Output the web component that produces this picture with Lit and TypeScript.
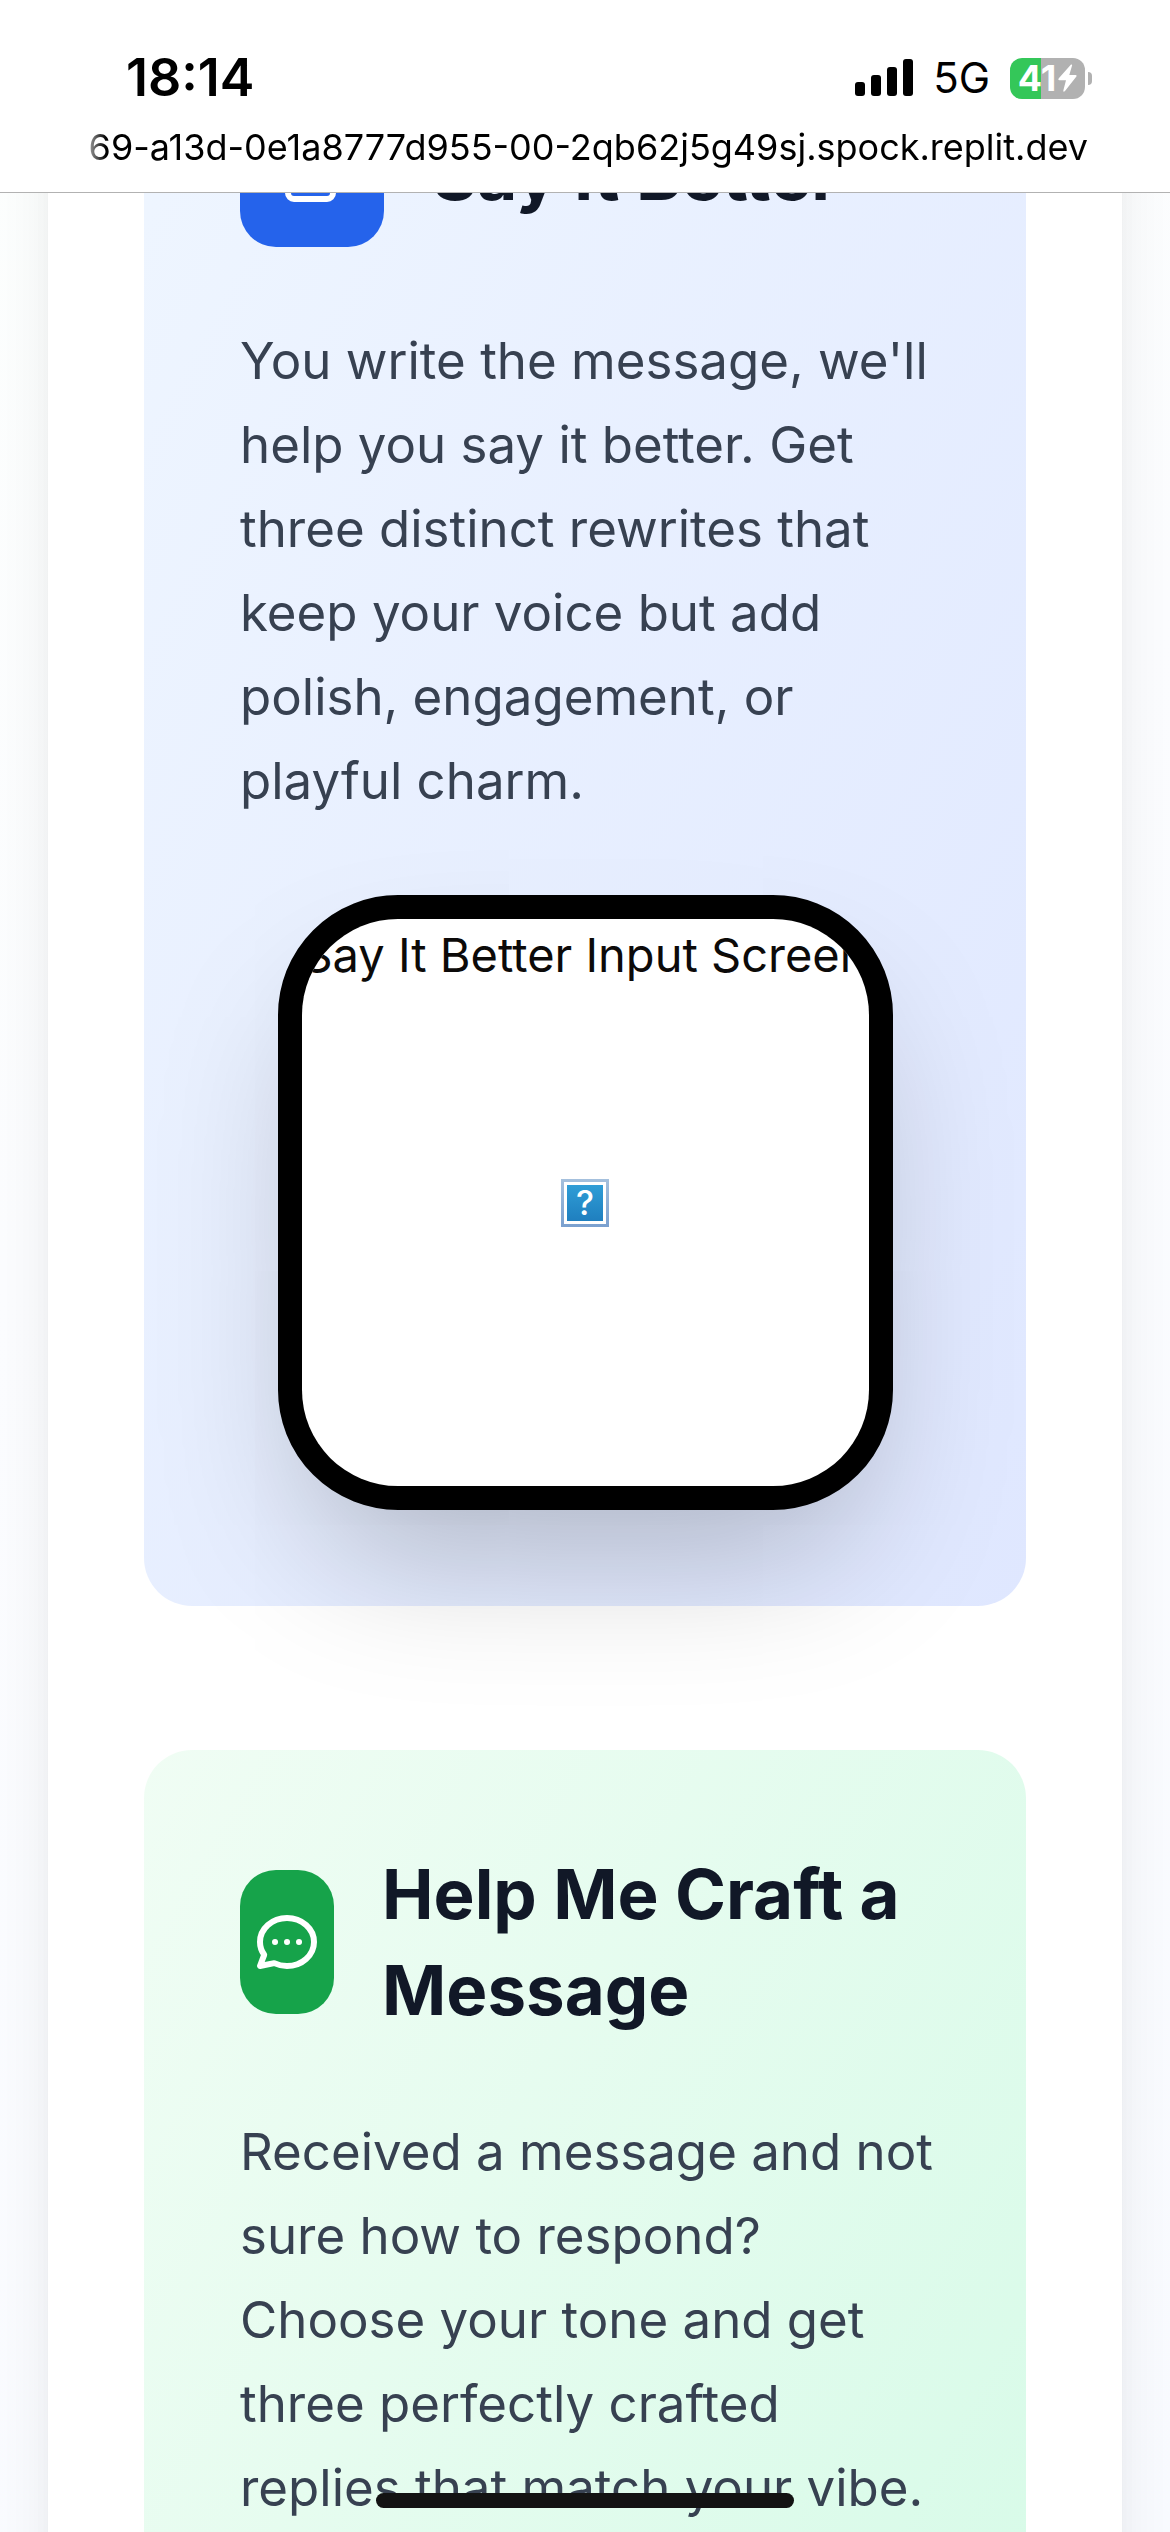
import { LitElement, html, css, svg } from "lit";
import { customElement, property } from "lit/decorators.js";

const editIcon = svg`<path d="M11 5H6a2 2 0 00-2 2v11a2 2 0 002 2h11a2 2 0 002-2v-5m-1.414-9.414a2 2 0 112.828 2.828L11.828 15H9v-2.828l8.586-8.586z" />`;
const chatIcon = svg`<path d="M8 12h.01M12 12h.01M16 12h.01M21 12c0 4.418-4.03 8-9 8a9.863 9.863 0 01-4.255-.949L3 20l1.395-3.72C3.512 15.042 3 13.574 3 12c0-4.418 4.03-8 9-8s9 3.582 9 8z" />`;

@customElement("status-header")
class StatusHeader extends LitElement {
  static styles = css`
    :host {
      display: block;
      background: #fff;
      border-bottom: 1px solid #b2b2b2;
      padding: 48px 78px 24px;
      color: #000;
    }
    .row {
      display: flex;
      align-items: center;
      height: 60px;
      padding-left: 48px;
    }
    .time {
      font-size: 52px;
      line-height: 60px;
      font-weight: 600;
      margin-right: auto;
    }
    .signal {
      width: 58px;
      height: 38px;
      margin-right: 20px;
    }
    .net {
      font-size: 42px;
      line-height: 60px;
      margin-right: 20px;
    }
    .battery {
      display: flex;
      align-items: center;
      gap: 3px;
    }
    .level {
      display: flex;
      align-items: center;
      justify-content: center;
      gap: 2px;
      width: 75px;
      height: 41px;
      border-radius: 12px;
      background: linear-gradient(to right, #34c759 41%, #b1b1b1 41%);
      color: #fff;
      font-size: 36px;
      line-height: 41px;
      font-weight: 700;
    }
    .bolt {
      width: 19px;
      height: 28px;
      fill: #fff;
    }
    .cap {
      width: 4px;
      height: 13px;
      border-radius: 0 6px 6px 0;
      background: #b1b1b1;
    }
    .address {
      display: flex;
      justify-content: flex-end;
      width: 100%;
      margin: 18px 0 0;
      padding: 0 4px 0 0;
      border: 0;
      background: none;
      overflow: hidden;
      white-space: nowrap;
      font: 400 36px/42px Inter, "Liberation Sans", sans-serif;
      color: #000;
      mask-image: linear-gradient(to right, transparent, #000 28px);
      -webkit-mask-image: linear-gradient(to right, transparent, #000 28px);
    }
  `;

  render() {
    return html`
      <div class="row">
        <span class="time">18:14</span>
        <svg class="signal" viewBox="0 0 58 38" aria-hidden="true">
          <rect x="0" y="23" width="10" height="14" rx="3" />
          <rect x="16" y="16" width="10" height="21" rx="3" />
          <rect x="32" y="8" width="10" height="29" rx="3" />
          <rect x="48" y="0" width="10" height="37" rx="3" />
        </svg>
        <span class="net">5G</span>
        <div class="battery">
          <div class="level">
            <span>41</span>
            <svg class="bolt" viewBox="0 0 19 28" aria-hidden="true">
              <path d="M13 0.5Q14.5 0 14 1.8L11.3 11H17.5Q19.3 11 18.2 12.8L7 27Q5 28.6 5.4 26.2L8 16.2H1.5Q-.4 16.2.8 14.3Z" />
            </svg>
          </div>
          <div class="cap"></div>
        </div>
      </div>
      <button class="address" type="button">
        <span>69-a13d-0e1a8777d955-00-2qb62j5g49sj.spock.replit.dev</span>
      </button>
    `;
  }
}

@customElement("device-preview")
class DevicePreview extends LitElement {
  @property() label = "";

  static styles = css`
    :host {
      display: block;
      box-sizing: border-box;
      width: 615px;
      max-width: 100%;
      aspect-ratio: 1;
      margin: 0 auto;
      border: 24px solid #000;
      border-radius: 120px;
      background: #000;
      box-shadow: 0 75px 150px -36px rgba(0, 0, 0, 0.25);
    }
    .screen {
      position: relative;
      display: grid;
      place-items: center;
      height: 100%;
      border-radius: 96px;
      overflow: hidden;
      background: #fff;
    }
    .label {
      position: absolute;
      inset: 0 0 auto;
      display: flex;
      justify-content: center;
      white-space: nowrap;
      font-size: 47px;
      line-height: 72px;
      color: #0c0a09;
    }
    .missing {
      display: grid;
      box-sizing: border-box;
      width: 48px;
      height: 48px;
      padding: 3px;
      background: linear-gradient(#a5c0dd, #7aa0cf);
    }
    .mark {
      border: 3px solid #fff;
      background: linear-gradient(#2f9dd6, #1f7fbf) padding-box;
      color: #fff;
      font-size: 34px;
      line-height: 36px;
      font-weight: 500;
      text-align: center;
    }
  `;

  render() {
    return html`
      <div class="screen">
        <span class="label">${this.label}</span>
        <div class="missing"><span class="mark">?</span></div>
      </div>
    `;
  }
}

@customElement("feature-card")
class FeatureCard extends LitElement {
  @property({ reflect: true }) tone = "blue";
  @property() heading = "";
  @property() text = "";
  @property() preview = "";

  static styles = css`
    :host {
      display: block;
      padding: 96px;
      border-radius: 48px;
      background: linear-gradient(to bottom right, #eff6ff, #dfe7ff);
    }
    :host([tone="green"]) {
      background: linear-gradient(to bottom right, #f0fdf4, #d1fae5);
    }
    .head {
      display: flex;
      align-items: center;
      gap: 48px;
      margin-bottom: 72px;
    }
    .tile {
      display: flex;
      align-items: center;
      justify-content: center;
      flex: none;
      width: 144px;
      height: 144px;
      border-radius: 36px;
      background: #2563eb;
    }
    :host([tone="green"]) .tile {
      width: 94px;
      background: #16a34a;
    }
    .icon {
      width: 72px;
      height: 72px;
      fill: none;
      stroke: #fff;
      stroke-width: 2;
      stroke-linecap: round;
      stroke-linejoin: round;
    }
    .title {
      margin: 0;
      font-size: 69px;
      line-height: 96px;
      font-weight: 700;
      color: #111827;
    }
    .text {
      margin: 0 -12px 72px 0;
      font-size: 51px;
      line-height: 84px;
      color: #374151;
    }
  `;

  render() {
    return html`
      <div class="head">
        <div class="tile">
          <svg class="icon" viewBox="0 0 24 24" aria-hidden="true">
            ${this.tone === "green" ? chatIcon : editIcon}
          </svg>
        </div>
        <h3 class="title">${this.heading}</h3>
      </div>
      <p class="text">${this.text}</p>
      <device-preview .label=${this.preview}></device-preview>
    `;
  }
}

@customElement("app-root")
class AppRoot extends LitElement {
  static styles = css`
    :host {
      display: block;
      position: relative;
      height: 100vh;
      overflow: hidden;
      font-family: Inter, "Liberation Sans", sans-serif;
      background: linear-gradient(150deg, #fdfffe, #fcfdff 40%, #f9fbff);
    }
    .bar {
      position: absolute;
      inset: 0 0 auto;
      z-index: 1;
    }
    .page {
      height: 100%;
      overflow-y: auto;
      scrollbar-width: none;
    }
    .sheet {
      display: grid;
      gap: 144px;
      margin: -281px 48px 0;
      padding: 288px 96px 96px;
      background: #fff;
      box-shadow: 0 60px 75px -15px rgba(0, 0, 0, 0.1), 0 24px 30px -18px rgba(0, 0, 0, 0.1);
    }
    .home {
      position: absolute;
      left: 50%;
      bottom: 24px;
      width: 418px;
      height: 15px;
      border-radius: 8px;
      background: #131313;
      transform: translateX(-50%);
    }
  `;

  render() {
    return html`
      <status-header class="bar"></status-header>
      <main class="page">
        <div class="sheet">
          <feature-card
            tone="blue"
            heading="Say It Better"
            text="You write the message, we'll help you say it better. Get three distinct rewrites that keep your voice but add polish, engagement, or playful charm."
            preview="Say It Better Input Screen"
          ></feature-card>
          <feature-card
            tone="green"
            heading="Help Me Craft a Message"
            text="Received a message and not sure how to respond? Choose your tone and get three perfectly crafted replies that match your vibe."
          ></feature-card>
        </div>
      </main>
      <div class="home"></div>
    `;
  }
}
